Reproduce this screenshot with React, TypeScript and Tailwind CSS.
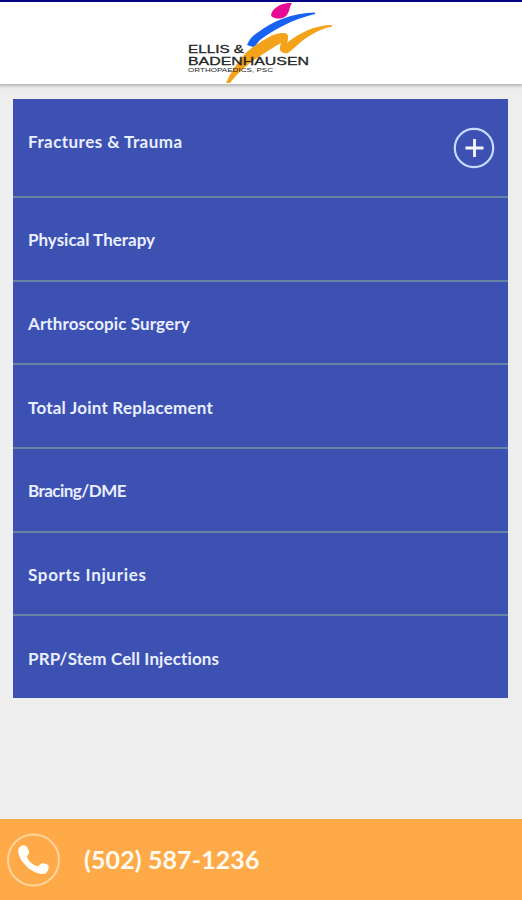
import React from 'react';

interface Service {
  label: string;
  tracking: string;
  expandable?: boolean;
}

const services: Service[] = [
  { label: 'Fractures & Trauma', tracking: 'tracking-[0.45px]', expandable: true },
  { label: 'Physical Therapy', tracking: 'tracking-[0px]' },
  { label: 'Arthroscopic Surgery', tracking: 'tracking-[0.1px]' },
  { label: 'Total Joint Replacement', tracking: 'tracking-[0.23px]' },
  { label: 'Bracing/DME', tracking: 'tracking-[-0.52px]' },
  { label: 'Sports Injuries', tracking: 'tracking-[0.67px]' },
  { label: 'PRP/Stem Cell Injections', tracking: 'tracking-[0.13px]' },
];

const Logo: React.FC = () => (
  <svg viewBox="0 0 160 84" className="mr-0.5 h-[84px] w-[160px]" role="img" aria-label="Ellis & Badenhausen Orthopaedics, PSC">
    <path d="M112 3C102 2 92 8 91 15C92 19 101 20 106 16C110 12 109 7 112 3Z" fill="#e80a94" />
    <path d="M67 45C69 40 72 36 77 33C93 21 112 13 135 12.5L135 14C113 19 93 30 80 40C77 43 76 47 73 47Z" fill="#1762f0" />
    <path d="M46 83C50 74 56 64 63 56C70 48 82 41 91 36C97 33 104 32 107 34C109 36 108 40 107 43C119 33 135 25 152 25L152 26.5C140 29 130 35 122 41C117 45 112 50 108 53C104 54 101 52 100 50C99 47 101 45 101 43C91 49 77 57 65 67C59 72 54 78 50 83Z" fill="#f5a21b" />
    <g fill="#252525" fontFamily="'Liberation Sans', Arial, sans-serif">
      <text x="8" y="52.7" fontSize="11" stroke="#252525" strokeWidth="0.3" textLength="56" lengthAdjust="spacingAndGlyphs">ELLIS &amp;</text>
      <text x="8" y="64.5" fontSize="11.5" stroke="#252525" strokeWidth="0.3" textLength="121" lengthAdjust="spacingAndGlyphs">BADENHAUSEN</text>
      <text x="8" y="72" fontSize="6" textLength="85" lengthAdjust="spacingAndGlyphs">ORTHOPAEDICS, PSC</text>
    </g>
  </svg>
);

const PlusIcon: React.FC = () => (
  <svg viewBox="0 0 42 42" className="h-[42px] w-[42px]" fill="none">
    <circle cx="21" cy="21" r="19.2" stroke="#c9daff" strokeWidth="2.2" />
    <path d="M12.5 21H30.5M21.5 12V30" stroke="#f5f8ff" strokeWidth="2.8" />
  </svg>
);

const PhoneIcon: React.FC = () => (
  <svg viewBox="0 0 54 54" className="h-[54px] w-[54px]">
    <circle cx="26.5" cy="27" r="25.5" fill="none" stroke="#ffd39b" strokeWidth="2" />
    <path
      d="M13.2 13.5C15.5 11.5 19 12 20.5 14.8L22 18.4C22.6 20.4 20.6 21.8 20 23.3C20.8 27.8 25.4 31.8 30.4 33.3C32.5 32.9 33.2 29.9 36 30.2L39.5 31C41.8 31.6 42.3 34 41.3 36.7C39.6 41 36.6 41.6 32.8 40.8C22.2 38.4 13 28.4 11.2 19.2C10.9 16.9 11.4 14.7 13.2 13.5Z"
      fill="#fffdf8"
    />
  </svg>
);

const ServiceRow: React.FC<{ service: Service }> = ({ service }) => (
  <li
    className={
      service.expandable
        ? 'flex h-[99px] shrink-0 items-start justify-between pt-7 pr-[13px] pl-[15px]'
        : 'flex min-h-0 flex-1 items-center pt-[3px] pl-[15px]'
    }
  >
    <span className={`text-[17px] leading-[30px] font-bold text-[#e9efff] ${service.tracking}`}>{service.label}</span>
    {service.expandable && (
      <button type="button" aria-label="Expand">
        <PlusIcon />
      </button>
    )}
  </li>
);

export default function App() {
  return (
    <div className="flex h-[900px] w-[522px] flex-col overflow-hidden bg-[#eeeeee] font-['Lato',sans-serif]">
      <header className="flex h-[84px] shrink-0 justify-center border-t-2 border-[#050582] bg-white shadow-[0_1px_3px_1px_#b4b4b4]">
        <div className="-mt-0.5">
          <Logo />
        </div>
      </header>

      <main className="flex-1 pt-[15px] pr-[14px] pl-[13px]">
        <ul className="flex h-[599px] flex-col divide-y-2 divide-[#6785a2] bg-[#3d51b2]">
          {services.map(service => (
            <ServiceRow key={service.label} service={service} />
          ))}
        </ul>
      </main>

      <footer className="flex h-[81px] shrink-0 items-center bg-[#ffaa48] pl-[7px]">
        <PhoneIcon />
        <a href="tel:5025871236" className="ml-[23px] text-[25px] font-bold tracking-[0.1px] text-[#fffaf0]">
          (502) 587-1236
        </a>
      </footer>
    </div>
  );
}
